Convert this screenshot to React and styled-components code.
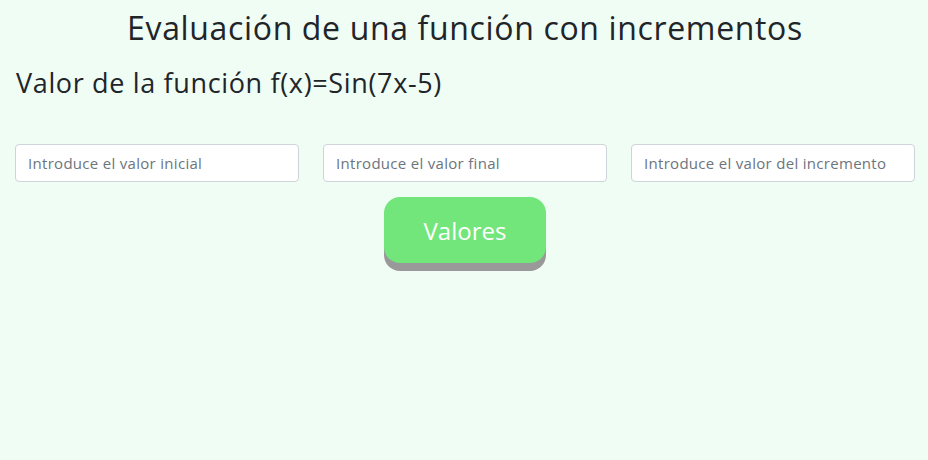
import React from 'react';
import styled, { createGlobalStyle } from 'styled-components';

const GlobalStyle = createGlobalStyle`
  html, body {
    margin: 0;
    background: #f0fdf4;
    font-family: "Open Sans", "Liberation Sans", sans-serif;
    color: #212529;
  }
  * { box-sizing: border-box; }
`;

const Page = styled.div`
  padding: 0 13px 0 15px;
`;

const Title = styled.h1`
  margin: 0;
  padding-top: 7px;
  text-align: center;
  font-size: 32px;
  font-weight: 400;
  letter-spacing: 0.65px;
  line-height: 42px;
`;

const Subtitle = styled.h3`
  margin: 17px 0 0 1px;
  font-size: 27px;
  font-weight: 400;
  letter-spacing: 0.65px;
  line-height: 34px;
`;

const InputRow = styled.div`
  display: grid;
  grid-template-columns: repeat(3, 1fr);
  gap: 24px;
  margin-top: 44px;
`;

const Field = styled.input`
  height: 38px;
  padding: 6px 12px;
  border: 1px solid #ced4da;
  border-radius: 4px;
  background: #fff;
  font-family: inherit;
  font-size: 15px;
  letter-spacing: 0.3px;
  color: #495057;

  &::placeholder {
    color: #6c757d;
  }
`;

const Actions = styled.div`
  display: flex;
  justify-content: center;
  margin-top: 15px;
  padding-bottom: 10px;
`;

const Button = styled.button`
  width: 162px;
  height: 66px;
  border: none;
  border-radius: 16px;
  background: #72e67a;
  box-shadow: 0 8px 0 #999;
  color: #fff;
  font-family: inherit;
  font-size: 24px;
  cursor: pointer;
`;

export default function App() {
  return (
    <Page>
      <GlobalStyle />
      <Title>Evaluación de una función con incrementos</Title>
      <Subtitle>Valor de la función f(x)=Sin(7x-5)</Subtitle>
      <InputRow>
        <Field placeholder="Introduce el valor inicial" />
        <Field placeholder="Introduce el valor final" />
        <Field placeholder="Introduce el valor del incremento" />
      </InputRow>
      <Actions>
        <Button>Valores</Button>
      </Actions>
    </Page>
  );
}
